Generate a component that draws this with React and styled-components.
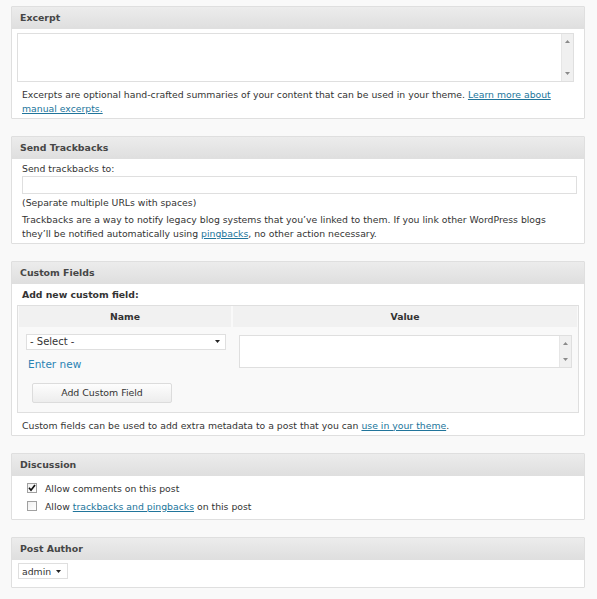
import React from "react";
import styled, { createGlobalStyle } from "styled-components";

const GlobalStyle = createGlobalStyle`
    body {
        margin: 0;
        background: #f9f9f9;
        font-family: "DejaVu Sans", Verdana, sans-serif;
        font-size: 9.3px;
        color: #333;
    }
    * {
        box-sizing: border-box;
    }
`;

const ScPage = styled.div`
    width: 574px;
    margin: 6px 0 0 11px;
    display: flex;
    flex-direction: column;
    gap: 17px;
`;

const ScBox = styled.div`
    background: #fff;
    border: 1px solid #dfdfdf;
    border-radius: 1px;
`;

const ScBoxHeader = styled.h3`
    margin: 0;
    height: 22px;
    line-height: 21px;
    padding-left: 8px;
    font-size: 9.4px;
    font-weight: bold;
    color: #464646;
    background: linear-gradient(to bottom, #ececec, #dfdfdf);
    border-bottom: 1px solid #dfdfdf;
`;

const ScBoxBody = styled.div`
    padding: ${({ padding }) => padding || "5px 9px 5px 5px"};
`;

const ScText = styled.p`
    margin: ${({ margin }) => margin || "0"};
    padding-left: ${({ indent }) => indent || "0"};
    line-height: 13.5px;
`;

const ScLink = styled.a`
    color: #21759b;
    text-decoration: underline;
`;

const ScAreaWrap = styled.div`
    display: flex;
    height: ${({ h }) => h}px;
    border: 1px solid #dfdfdf;
    background: #fff;
`;

const ScArea = styled.textarea`
    flex: 1;
    border: none;
    outline: none;
    resize: none;
    background: transparent;
`;

const ScScroll = styled.div`
    width: 12px;
    background: #f0f0f0;
    border-left: 1px solid #e6e6e6;
    display: flex;
    flex-direction: column;
    justify-content: space-between;
    align-items: center;
    padding: 6px 0;
`;

const Arrow = ({ down }) => (
    <svg width="5" height="3" viewBox="0 0 5 3">
        <path d={down ? "M0 0h5L2.5 3z" : "M0 3h5L2.5 0z"} fill="#8a8a8a" />
    </svg>
);

const TextArea = ({ h }) => (
    <ScAreaWrap h={h}>
        <ScArea />
        <ScScroll>
            <Arrow />
            <Arrow down />
        </ScScroll>
    </ScAreaWrap>
);

const ScInput = styled.input`
    display: block;
    width: 555px;
    height: 18px;
    margin: 0 0 0 10px;
    border: 1px solid #dfdfdf;
    outline: none;
`;

const ScLabel = styled.div`
    font-weight: ${({ bold }) => (bold ? "bold" : "normal")};
    line-height: 13.5px;
    padding-left: ${({ indent }) => indent || "0"};
`;

const ScTable = styled.div`
    margin: 3px 0 0 0;
    border: 1px solid #dfdfdf;
    background: #f9f9f9;
    display: grid;
    grid-template-columns: 212px 1fr;
    grid-template-rows: 21px 1fr;
    column-gap: 2px;
    padding: 0 1px 0 1px;
    height: 108px;
`;

const ScTh = styled.div`
    background: #f1f1f1;
    line-height: 21px;
    text-align: center;
    font-weight: bold;
`;

const ScCell = styled.div`
    padding: ${({ padding }) => padding};
`;

const ScSelect = styled.div`
    width: ${({ w }) => w}px;
    height: 16px;
    border: 1px solid #dfdfdf;
    background: #fff;
    display: flex;
    align-items: center;
    justify-content: space-between;
    padding: 0 ${({ pr }) => pr || 5}px 0 3px;
    color: #333;
    font-size: ${({ size }) => size || "10px"};
`;

const Caret = () => (
    <svg width="5" height="3" viewBox="0 0 5 3">
        <path d="M0 0h5L2.5 3z" fill="#222" />
    </svg>
);

const ScEnterNew = styled.a`
    display: block;
    color: #2a83b4;
    font-size: 10.5px;
    margin: 7px 0 0 2px;
    line-height: 14px;
    text-decoration: none;
`;

const ScButton = styled.button`
    display: block;
    width: 140px;
    height: 20px;
    margin: 12px 0 0 6px;
    border: 1px solid #dcdcdc;
    border-radius: 2px;
    background: linear-gradient(to bottom, #fdfdfd, #ededed);
    font-family: inherit;
    font-size: 9.4px;
    color: #333;
`;

const ScCheckRow = styled.label`
    display: flex;
    align-items: center;
    gap: 8px;
    height: 18px;
    padding-left: 15px;
`;

const ScCheck = styled.span`
    width: 10px;
    height: 10px;
    border: 1px solid #a0a0a0;
    background: linear-gradient(to bottom right, #f0f0f0, #fff);
    display: flex;
    align-items: center;
    justify-content: center;
`;

const Tick = () => (
    <svg width="8" height="8" viewBox="0 0 8 8">
        <path d="M1 3.8l2 2.4L7 1" fill="none" stroke="#111" strokeWidth="1.7" />
    </svg>
);

export default function App() {
    return (
        <>
            <GlobalStyle />
            <ScPage>
                <ScBox>
                    <ScBoxHeader>Excerpt</ScBoxHeader>
                    <ScBoxBody padding="4px 10px 3px 5px">
                        <TextArea h={49} />
                        <ScText margin="6px 0 0 0" indent="5px">
                            Excerpts are optional hand-crafted summaries of your content that can be
                            used in your theme. <ScLink href="#">Learn more about manual excerpts.</ScLink>
                        </ScText>
                    </ScBoxBody>
                </ScBox>

                <ScBox>
                    <ScBoxHeader>Send Trackbacks</ScBoxHeader>
                    <ScBoxBody padding="3px 8px 3px 0">
                        <ScLabel indent="10px">Send trackbacks to:</ScLabel>
                        <ScInput />
                        <ScText margin="2px 0 0 0" indent="10px">(Separate multiple URLs with spaces)</ScText>
                        <ScText margin="4px 0 0 0" indent="10px">
                            Trackbacks are a way to notify legacy blog systems that you’ve linked to
                            them. If you link other WordPress blogs they’ll be notified automatically
                            using <ScLink href="#">pingbacks</ScLink>, no other action necessary.
                        </ScText>
                    </ScBoxBody>
                </ScBox>

                <ScBox>
                    <ScBoxHeader>Custom Fields</ScBoxHeader>
                    <ScBoxBody padding="4px 5px 3px 5px">
                        <ScLabel bold indent="5px">Add new custom field:</ScLabel>
                        <ScTable>
                            <ScTh>Name</ScTh>
                            <ScTh>Value</ScTh>
                            <ScCell padding="7px 0 0 7px">
                                <ScSelect w={200}>
                                    <span>- Select -</span>
                                    <Caret />
                                </ScSelect>
                                <ScEnterNew href="#">Enter new</ScEnterNew>
                                <ScButton>Add Custom Field</ScButton>
                            </ScCell>
                            <ScCell padding="8px 5px 0 6px">
                                <TextArea h={33} />
                            </ScCell>
                        </ScTable>
                        <ScText margin="6px 0 0 0" indent="5px">
                            Custom fields can be used to add extra metadata to a post that you can{" "}
                            <ScLink href="#">use in your theme</ScLink>.
                        </ScText>
                    </ScBoxBody>
                </ScBox>

                <ScBox>
                    <ScBoxHeader>Discussion</ScBoxHeader>
                    <ScBoxBody padding="3px 5px 4px 0">
                        <ScCheckRow>
                            <ScCheck>
                                <Tick />
                            </ScCheck>
                            Allow comments on this post
                        </ScCheckRow>
                        <ScCheckRow>
                            <ScCheck />
                            <span>
                                Allow <ScLink href="#">trackbacks and pingbacks</ScLink> on this post
                            </span>
                        </ScCheckRow>
                    </ScBoxBody>
                </ScBox>

                <ScBox>
                    <ScBoxHeader>Post Author</ScBoxHeader>
                    <ScBoxBody padding="3px 5px 8px 6px">
                        <ScSelect w={50} pr={6} size="9.3px">
                            <span>admin</span>
                            <Caret />
                        </ScSelect>
                    </ScBoxBody>
                </ScBox>
            </ScPage>
        </>
    );
}
